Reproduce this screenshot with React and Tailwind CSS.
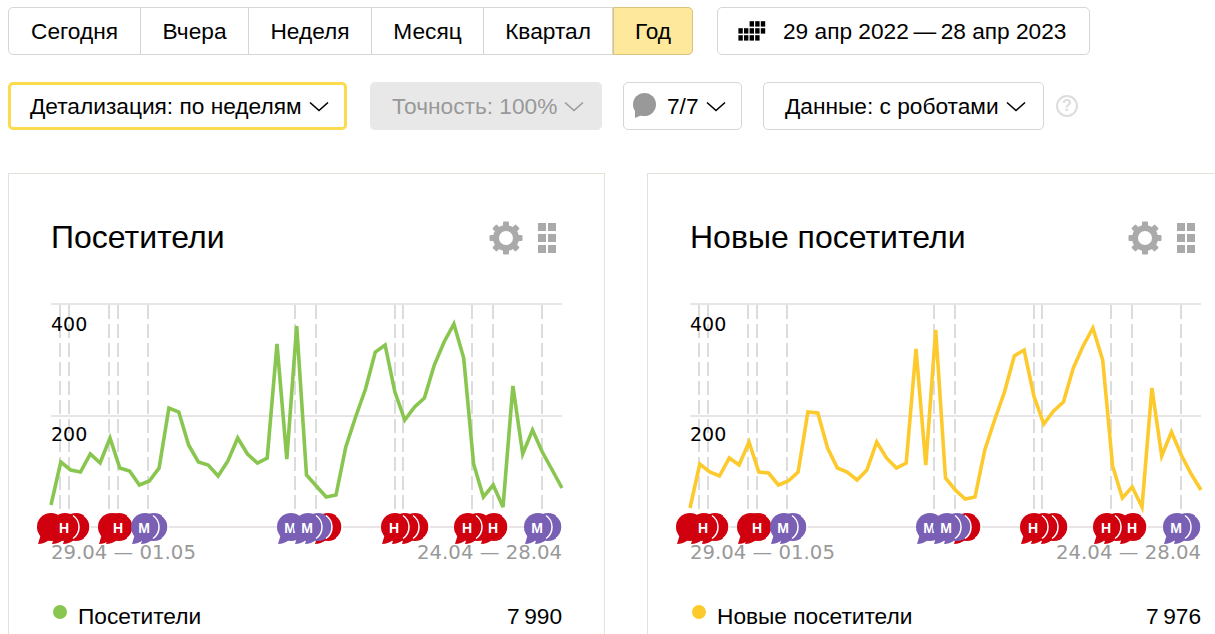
import React from 'react';

const greenData = [505, 462, 470, 472, 454, 463, 438, 468, 471, 485, 481, 468, 408, 412, 445, 462, 465, 476, 461, 438, 454, 463, 458, 344, 459, 326, 475, 486, 497, 495, 447, 417, 389, 352, 345, 392, 420, 407, 398, 365, 342, 324, 358, 464, 497, 485, 507, 386, 454, 430, 452, 470, 488];
const yellowData = [508, 464, 472, 476, 458, 465, 442, 472, 473, 485, 481, 472, 412, 413, 448, 468, 472, 480, 470, 442, 458, 468, 463, 349, 465, 330, 478, 490, 499, 497, 450, 420, 392, 356, 350, 396, 424, 411, 402, 368, 346, 328, 360, 466, 498, 487, 507, 388, 456, 432, 455, 474, 490];

const dashes = [9, 18, 58, 67, 97, 244, 265, 344, 352, 421, 442, 491];
const RED = '#d0000f';
const PURPLE = '#7a60b5';

// back to front
const flags = [
    { x: 25, c: RED },
    { x: 0, c: RED },
    { x: 14, c: RED, t: 'Н' },
    { x: 103, c: PURPLE },
    { x: 61, c: RED },
    { x: 68, c: RED, t: 'Н' },
    { x: 94, c: PURPLE, t: 'М' },
    { x: 277, c: RED },
    { x: 267, c: PURPLE },
    { x: 240, c: PURPLE, t: 'М' },
    { x: 257, c: PURPLE, t: 'М' },
    { x: 364, c: RED },
    { x: 354, c: RED },
    { x: 344, c: RED, t: 'Н' },
    { x: 427, c: RED },
    { x: 443, c: RED, t: 'Н' },
    { x: 417, c: RED, t: 'Н' },
    { x: 497, c: PURPLE },
    { x: 487, c: PURPLE, t: 'М' },
];

const Chevron = ({ color = '#000', className = '' }) => (
    <svg width="20" height="11" viewBox="0 0 20 11" fill="none" className={className}>
        <path d="M1 1.5 L10 9.5 L19 1.5" stroke={color} strokeWidth="1.6" />
    </svg>
);

const CalendarIcon = () => {
    const rows = [[2, 3, 4], [0, 1, 2, 3, 4], [0, 1, 2, 3]];
    return (
        <svg width="28" height="20" viewBox="0 0 28 20" fill="#000">
            {rows.map((cols, r) => cols.map(c => (
                <rect key={`${r}-${c}`} x={c * 5.6 + 0.4} y={r * 7 + 0.2} width="4.4" height="5.4" />
            )))}
        </svg>
    );
};

const GearIcon = () => (
    <svg width="34" height="34" viewBox="-17 -17 34 34" fill="#aaaaaa">
        <circle r="10" fill="none" stroke="#aaaaaa" strokeWidth="6" />
        {[0, 45, 90, 135, 180, 225, 270, 315].map(a => (
            <rect key={a} x="-3" y="-16.5" width="6" height="6" rx="1" transform={`rotate(${a})`} />
        ))}
    </svg>
);

const DragIcon = () => (
    <div className="grid grid-cols-2 gap-x-[2px] gap-y-[3px] w-[18px]">
        {[0, 1, 2, 3, 4, 5].map(i => <div key={i} className="w-2 h-2 bg-[#aaaaaa]" />)}
    </div>
);

const Flag = ({ x, c, t }) => (
    <g>
        <circle cx={x} cy="527" r="14" fill={c} />
        <path d={`M${x - 10} 534 L${x - 13} 544 Q${x - 7} 544 ${x - 2} 540 Z`} fill={c} />
        <path d={`M${x + 8} 515.5 A14 14 0 0 1 ${x + 8} 538.5`} stroke="#fff" strokeWidth="1.5" fill="none" />
        {t && (
            <text x={x - 1} y="533" textAnchor="middle" fill="#fff" className="font-['Liberation_Sans',sans-serif] text-[14px] font-bold">{t}</text>
        )}
    </g>
);

const Chart = ({ data, color }) => {
    const pts = data.map((y, i) => `${((i * 511) / 52).toFixed(1)},${y}`).join(' ');
    return (
        <svg width="511" height="266" viewBox="0 296 511 266" className="block overflow-visible mt-[40px]">
            {[304, 416, 527].map(y => (
                <line key={y} x1="0" x2="511" y1={y} y2={y} stroke="#e8e4e8" strokeWidth="2" />
            ))}
            {dashes.map(x => (
                <line key={x} x1={x} x2={x} y1="305" y2="514" stroke="#dcdcdc" strokeWidth="2" strokeDasharray="14 5" />
            ))}
            <polyline points={pts} fill="none" stroke={color} strokeWidth="3.6" strokeLinejoin="miter" />
            <text x="0" y="331" fill="#000" className="font-['DejaVu_Sans',sans-serif] text-[19px]">400</text>
            <text x="0" y="441" fill="#000" className="font-['DejaVu_Sans',sans-serif] text-[19px]">200</text>
            {flags.map((f, i) => <Flag key={i} {...f} />)}
            <text x="0" y="559" fill="#999999" className="font-['DejaVu_Sans',sans-serif] text-[19.7px]">29.04 — 01.05</text>
            <text x="511" y="559" textAnchor="end" fill="#999999" className="font-['DejaVu_Sans',sans-serif] text-[19.7px]">24.04 — 28.04</text>
        </svg>
    );
};

const Card = ({ title, data, color, total }) => (
    <section className="w-[597px] h-[500px] shrink-0 border border-[#e4e2d8] pt-[44px] pl-[42px] pr-[42px]">
        <header className="flex items-center justify-between h-[38px]">
            <h2 className="text-[32px] leading-[38px] text-black whitespace-nowrap">{title}</h2>
            <div className="flex items-center gap-[15px] mr-[6px] mt-[1px]">
                <GearIcon />
                <DragIcon />
            </div>
        </header>
        <Chart data={data} color={color} />
        <div className="flex items-center justify-between mt-[40px] h-[28px] text-[22.7px] text-black">
            <div className="flex items-center">
                <span className="w-[14px] h-[14px] rounded-full ml-[2px] mr-[11px] -mt-[9px]" style={{ backgroundColor: color }} />
                <span>{title}</span>
            </div>
            <span>{total}</span>
        </div>
    </section>
);

const Dropdown = ({ children, className = '', chevron = '#000' }) => (
    <button className={`h-[48px] flex items-center rounded-[5px] text-[22.7px] whitespace-nowrap ${className}`}>
        {children}
        <Chevron color={chevron} className="ml-[7px]" />
    </button>
);

const tabs = [
    { label: 'Сегодня', width: 'w-[132px]' },
    { label: 'Вчера', width: 'w-[108px]' },
    { label: 'Неделя', width: 'w-[123px]' },
    { label: 'Месяц', width: 'w-[112px]' },
    { label: 'Квартал', width: 'w-[129px]' },
];

export default function App() {
    return (
        <div className="w-[1215px] h-[634px] overflow-hidden bg-white font-['Liberation_Sans',Arial,sans-serif] text-black pt-[7px] pl-[8px]">
            <div className="flex">
                <div className="flex h-[48px] text-[22.7px] rounded-[5px] border border-[#d6d6d6]">
                    {tabs.map(t => (
                        <div key={t.label} className={`flex items-center justify-center border-r border-[#d6d6d6] ${t.width}`}>{t.label}</div>
                    ))}
                    <div className="flex items-center justify-center w-[80px] -my-px -mr-px bg-[#fee89b] border border-[#d9c47c] rounded-r-[5px]">Год</div>
                </div>
                <div className="ml-[24px] h-[48px] w-[373px] flex items-center pl-[20px] rounded-[5px] border border-[#d6d6d6] text-[22.7px]">
                    <CalendarIcon />
                    <span className="ml-[17px] whitespace-nowrap">29 апр 2022{'\u2009'}—{'\u2009'}28 апр 2023</span>
                </div>
            </div>

            <div className="flex items-center mt-[27px]">
                <Dropdown className="w-[339px] pl-[19px] border-[3px] border-[#fbdc4f]">Детализация: по неделям</Dropdown>
                <Dropdown className="w-[232px] ml-[23px] pl-[22px] bg-[#e8e8e8] text-[#999999]" chevron="#999999">Точность: 100%</Dropdown>
                <Dropdown className="w-[119px] ml-[21px] pl-[8px] border border-[#d6d6d6]">
                    <svg width="24" height="26" viewBox="0 0 24 26" className="mr-[11px]">
                        <circle cx="12.5" cy="11.5" r="11.5" fill="#999999" />
                        <path d="M3 17 L3 25 L12 21 Z" fill="#999999" />
                    </svg>
                    7/7
                </Dropdown>
                <Dropdown className="w-[281px] ml-[21px] pl-[21px] border border-[#d6d6d6]">Данные: с роботами</Dropdown>
                <div className="ml-[12px] w-[22px] h-[22px] rounded-full border-2 border-[#dddddd] text-[#dddddd] text-[16px] font-bold flex items-center justify-center">?</div>
            </div>

            <div className="flex gap-[42px] mt-[43px]">
                <Card title="Посетители" data={greenData} color="#88c64f" total={'7\u2009990'} />
                <Card title="Новые посетители" data={yellowData} color="#fdca2e" total={'7\u2009976'} />
            </div>
        </div>
    );
}
